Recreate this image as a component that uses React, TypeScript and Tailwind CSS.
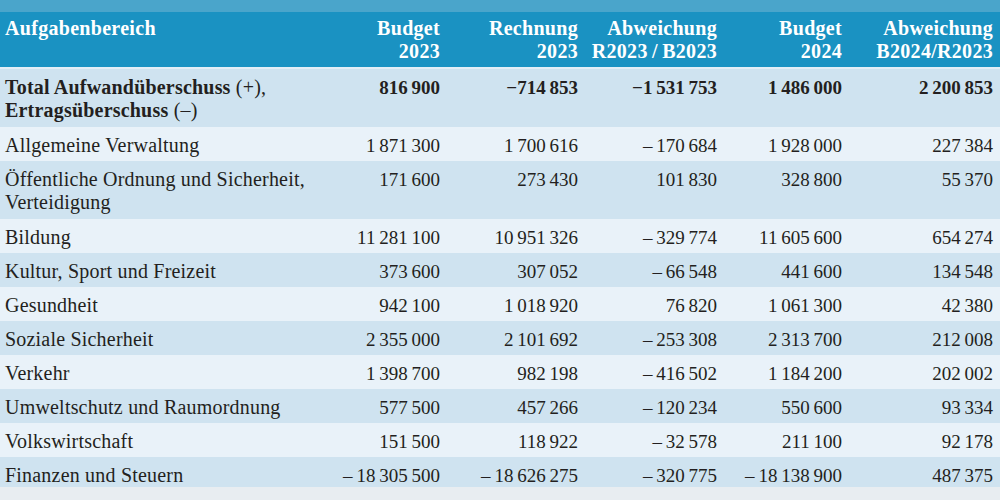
import React from "react";

const S = "\u202F";
const fmt = (s: string) => s.replace(/ /g, S);

type Row = { label: React.ReactNode[]; vals: string[]; bold?: boolean; dark: boolean; h?: string };

const rows: Row[] = [
  {
    label: [
      <>
        Total Aufwandüberschuss <span className="font-normal">(+),</span>
      </>,
      <>
        Ertragsüberschuss <span className="font-normal">(–)</span>
      </>,
    ],
    vals: ["816 900", "−714 853", "−1 531 753", "1 486 000", "2 200 853"],
    bold: true,
    dark: true,
  },
  { label: ["Allgemeine Verwaltung"], vals: ["1 871 300", "1 700 616", "– 170 684", "1 928 000", "227 384"], dark: false },
  {
    label: ["Öffentliche Ordnung und Sicherheit,", "Verteidigung"],
    vals: ["171 600", "273 430", "101 830", "328 800", "55 370"],
    dark: true,
  },
  { label: ["Bildung"], vals: ["11 281 100", "10 951 326", "– 329 774", "11 605 600", "654 274"], dark: false },
  { label: ["Kultur, Sport und Freizeit"], vals: ["373 600", "307 052", "– 66 548", "441 600", "134 548"], dark: true },
  { label: ["Gesundheit"], vals: ["942 100", "1 018 920", "76 820", "1 061 300", "42 380"], dark: false },
  { label: ["Soziale Sicherheit"], vals: ["2 355 000", "2 101 692", "– 253 308", "2 313 700", "212 008"], dark: true },
  { label: ["Verkehr"], vals: ["1 398 700", "982 198", "– 416 502", "1 184 200", "202 002"], dark: false },
  { label: ["Umweltschutz und Raumordnung"], vals: ["577 500", "457 266", "– 120 234", "550 600", "93 334"], dark: true },
  { label: ["Volkswirtschaft"], vals: ["151 500", "118 922", "– 32 578", "211 100", "92 178"], dark: false },
  {
    label: ["Finanzen und Steuern"],
    vals: ["– 18 305 500", "– 18 626 275", "– 320 775", "– 18 138 900", "487 375"],
    dark: true,
    h: "h-[30px]",
  },
];

const colW = ["w-[140px]", "w-[138px]", "w-[139px]", "w-[125px]", "w-[151px]"];

export default function App() {
  return (
    <div
      className="w-[1000px] h-[500px] overflow-hidden bg-[#e8edf1] text-[#231f20] text-[19px] leading-[23px]"
      style={{ fontFamily: '"Liberation Serif", "DejaVu Serif", serif' }}
    >
      <div className="h-[12px] bg-[#4aa5cb]" />
      <div className="flex h-[57px] bg-[#1a92c2] pt-[5px] font-bold text-white text-[20px] tracking-[0.3px] border-b-2 border-[#e3eef6]">
        <div className="w-[300px] pl-[5px]">Aufgabenbereich</div>
        <div className={`${colW[0]} text-right`}>
          Budget
          <br />
          2023
        </div>
        <div className={`${colW[1]} text-right`}>
          Rechnung
          <br />
          2023
        </div>
        <div className={`${colW[2]} text-right`}>
          Abweichung
          <br />
          R2023{"\u2009/\u2009"}B2023
        </div>
        <div className={`${colW[3]} text-right`}>
          Budget
          <br />
          2024
        </div>
        <div className={`${colW[4]} text-right`}>
          Abweichung
          <br />
          B2024/R2023
        </div>
      </div>
      {rows.map((r, i) => (
        <div
          key={i}
          className={`flex pt-[7px] ${r.h ?? (r.label.length > 1 ? "h-[58px]" : "h-[34px]")} ${
            r.dark ? "bg-[#cfe3f0]" : "bg-[#e9f2f9]"
          } ${r.bold ? "font-bold" : ""}`}
        >
          <div className="w-[300px] pl-[5px] whitespace-nowrap text-[20px] tracking-[0.2px]">
            {r.label.map((l, j) => (
              <div key={j}>{l}</div>
            ))}
          </div>
          {r.vals.map((v, j) => (
            <div key={j} className={`${colW[j]} text-right whitespace-nowrap`}>
              {fmt(v)}
            </div>
          ))}
        </div>
      ))}
    </div>
  );
}
